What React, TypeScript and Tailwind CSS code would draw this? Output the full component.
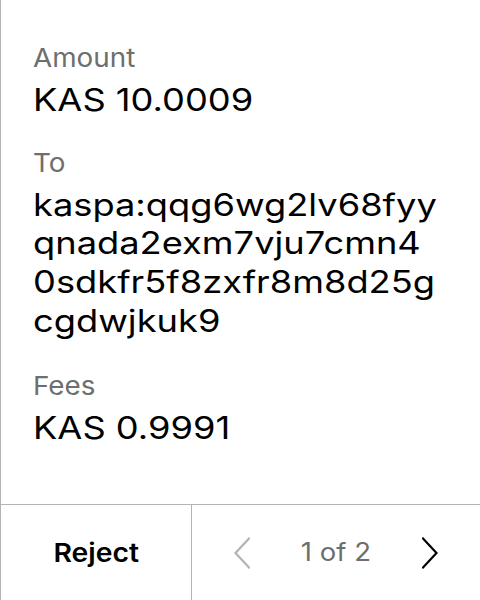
import React from "react";

function Label({ children, className = "" }: { children: React.ReactNode; className?: string }) {
  return (
    <div className={"text-[26px] leading-[31px] text-[#6e6e6e] " + className}>
      <span className="inline-block origin-left scale-x-[1.07]">{children}</span>
    </div>
  );
}

function Value({ children, className = "" }: { children: React.ReactNode; className?: string }) {
  return (
    <div className={"text-[31px] leading-[38.7px] text-black " + className}>
      <span className="inline-block origin-left scale-x-[1.17]">{children}</span>
    </div>
  );
}

export default function App() {
  return (
    <div
      className="w-[480px] h-[600px] bg-white flex flex-col overflow-hidden border-l border-[#b3b3b3]"
      style={{ fontFamily: "Inter, 'Noto Sans', sans-serif" }}
    >
      <div className="h-[505px] border-b border-[#b3b3b3] pl-[32px] pt-[42px] flex flex-col">
        <Label>Amount</Label>
        <Value className="mt-[8px]">KAS 10.0009</Value>
        <Label className="mt-[27px]">To</Label>
        <Value className="mt-[8px]">
          kaspa:qqg6wg2lv68fyy
          <br />
          qnada2exm7vju7cmn4
          <br />
          0sdkfr5f8zxfr8m8d25g
          <br />
          cgdwjkuk9
        </Value>
        <Label className="mt-[29px]">Fees</Label>
        <Value className="mt-[8px]">KAS 0.9991</Value>
      </div>
      <div className="flex-1 flex">
        <div className="w-[191px] border-r border-[#b3b3b3] flex items-center justify-center text-[26px] font-semibold text-black">
          <span className="inline-block scale-x-[1.09]">Reject</span>
        </div>
        <div className="flex-1 flex items-center justify-between pl-[42px] pr-[42px]">
          <svg width="16" height="32" viewBox="0 0 16 32" fill="none" stroke="#b3b3b3" strokeWidth="2.2" strokeLinecap="square">
            <path d="M15 1.5 L1.5 16 L15 30.5" />
          </svg>
          <span className="inline-block text-[25px] text-[#6e6e6e] scale-x-[1.1]">1 of 2</span>
          <svg width="16" height="32" viewBox="0 0 16 32" fill="none" stroke="#000" strokeWidth="2.2" strokeLinecap="square">
            <path d="M1 1.5 L14.5 16 L1 30.5" />
          </svg>
        </div>
      </div>
    </div>
  );
}
